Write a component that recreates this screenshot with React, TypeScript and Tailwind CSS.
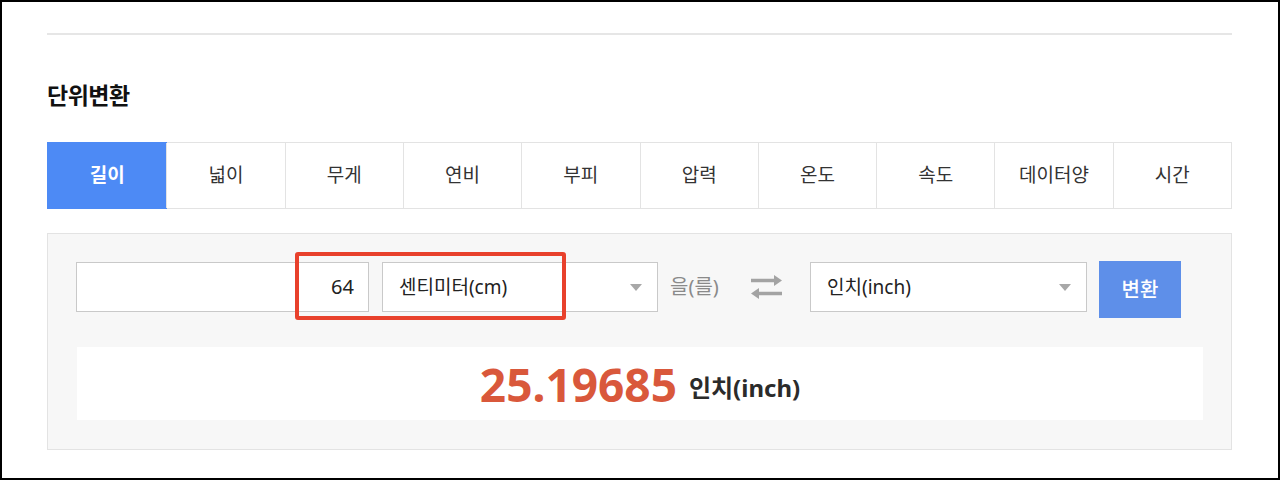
import { useState } from "react";

const tabs = ["길이", "넓이", "무게", "연비", "부피", "압력", "온도", "속도", "데이터양", "시간"];

const font = { fontFamily: '"Noto Sans", "Noto Sans CJK KR", sans-serif' };

function Caret() {
  return (
    <svg width="12" height="7" viewBox="0 0 12 7" className="shrink-0">
      <path d="M0 0 L12 0 L6 7 Z" fill="#a8a8a8" />
    </svg>
  );
}

function SwapIcon() {
  return (
    <svg width="33" height="26" viewBox="0 0 33 26">
      <g stroke="#a3a3a3" strokeWidth="3.5" fill="none">
        <path d="M1 6.5 H27" />
        <path d="M6 19.5 H32" />
      </g>
      <path d="M24 1 L32 6.5 L24 12 Z" fill="#a3a3a3" />
      <path d="M9 14 L1 19.5 L9 25 Z" fill="#a3a3a3" />
    </svg>
  );
}

export default function App() {
  const [active, setActive] = useState(0);

  return (
    <div
      className="w-[1280px] h-[480px] border-2 border-black bg-white pl-[45px] pt-[31px] text-[#333]"
      style={font}
    >
      <div className="w-[1185px]">
        <div className="h-[2px] bg-[#e6e6e6]" />

        {/* 제목 */}
        <h2 className="mt-[45px] h-[30px] text-[23px] font-bold leading-[30px] tracking-[-0.5px] text-[#111]">
          단위변환
        </h2>

        {/* 탭 */}
        <div className="mt-[32px] grid grid-cols-10 border border-[#e3e3e3] h-[67px]">
          {tabs.map((t, i) => (
            <button
              key={t}
              onClick={() => setActive(i)}
              className={
                i === active
                  ? "flex items-center justify-center bg-[#4d8af5] text-[19px] font-bold text-white -m-px"
                  : "flex items-center justify-center border-l border-[#e3e3e3] text-[19px] text-[#333] first:border-l-0"
              }
            >
              {t}
            </button>
          ))}
        </div>

        {/* 변환 패널 */}
        <div className="relative mt-[24px] border border-[#e3e3e3] bg-[#f7f7f7] px-[28px] pt-[28px] pb-[29px]">
          <div className="flex items-start">
            <div className="flex h-[50px] w-[293px] items-center justify-end border border-[#c9c9c9] bg-white pr-[14px] text-[20px] text-[#222]">
              64
            </div>
            <div className="ml-[13px] flex h-[50px] w-[276px] items-center justify-between border border-[#c9c9c9] bg-white pl-[16px] pr-[15px] text-[19px] text-[#222]">
              <span>센티미터(cm)</span>
              <Caret />
            </div>
            <div className="ml-[12px] flex h-[50px] w-[54px] items-center whitespace-nowrap text-[20px] text-[#8a8a8a]">
              을(를)
            </div>
            <div className="ml-[26px] flex h-[50px] items-center">
              <SwapIcon />
            </div>
            <div className="ml-[27px] flex h-[50px] w-[277px] items-center justify-between border border-[#c9c9c9] bg-white pl-[16px] pr-[15px] text-[19px] text-[#222]">
              <span>인치(inch)</span>
              <Caret />
            </div>
            <button className="ml-[12px] -mt-px flex h-[57px] w-[82px] items-center justify-center bg-[#5e8fe9] text-[20px] font-medium text-white">
              변환
            </button>
          </div>

          <div className="mt-[29px] ml-px flex h-[73px] items-center justify-center gap-[12px] bg-white">
            <span className="text-[46px] font-bold leading-none text-[#d9583b]">25.19685</span>
            <span className="mt-[8px] text-[24px] font-bold leading-none text-[#2b2b2b]">인치(inch)</span>
          </div>

          {/* 강조 표시 */}
          <div className="absolute left-[247px] top-[18px] h-[68px] w-[271px] rounded-[3px] border-4 border-[#e8412c]" />
        </div>
      </div>
    </div>
  );
}
